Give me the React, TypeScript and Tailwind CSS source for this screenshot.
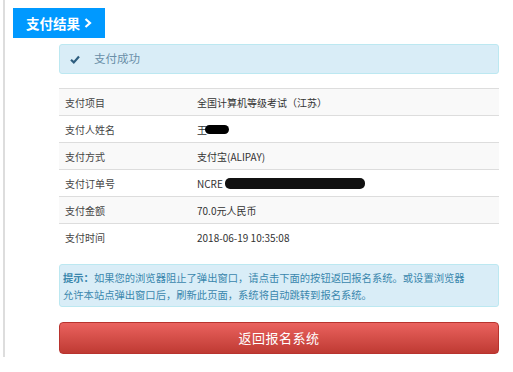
import React from "react";

const rows = [
    { label: "支付项目", value: "全国计算机等级考试（江苏）" },
    { label: "支付人姓名", value: "王", redact: "name" },
    { label: "支付方式", value: "支付宝(ALIPAY)" },
    { label: "支付订单号", value: "NCRE", redact: "order" },
    { label: "支付金额", value: "70.0元人民币" },
    { label: "支付时间", value: "2018-06-19 10:35:08" },
];

export default function App() {
    // JSX
    return (
        <div className="w-[513px] h-[372px] bg-white font-['Noto_Sans_CJK_SC',sans-serif] text-[#333]">
            <div className="ml-[3px] w-[510px] h-[357px] border-l-2 border-[#dddddd] pt-[8px]">
                {/* TITLE */}
                <div className="ml-[8px] w-[92px] h-[30px] bg-[#0099ff] flex items-center pl-[13px] gap-[4px] text-white text-[13.5px] font-bold">
                    <span>支付结果</span>
                    <svg width="8" height="10" viewBox="0 0 8 10">
                        <path d="M1.5 1 L6 5 L1.5 9" fill="none" stroke="white" strokeWidth="2.2" />
                    </svg>
                </div>

                <div className="ml-[54px] w-[440px]">
                    {/* SUCCESS ALERT */}
                    <div className="mt-[6px] h-[30px] rounded-[3px] border border-[#bce8f1] bg-[#d9edf7] flex items-center pl-[10px] text-[11.5px] text-[#6a8fa8]">
                        <svg width="10" height="9" viewBox="0 0 10 9" className="mr-[14px]">
                            <path d="M1 4.8 L3.8 7.4 L9 1.6" fill="none" stroke="#2d5d7e" strokeWidth="2.2" />
                        </svg>
                        <span>支付成功</span>
                    </div>

                    {/* TABLE */}
                    <div className="mt-[14px] text-[10px]">
                        {rows.map((row, i) => (
                            <div
                                key={row.label}
                                className={`h-[27px] border-t border-[#dddddd] flex items-center ${i % 2 === 0 ? 'bg-[#f9f9f9]' : 'bg-white'}`}
                            >
                                <div className="w-[132px] pl-[6px] text-[#444]">{row.label}</div>
                                <div className="pl-[6px] flex items-center text-[#333]">
                                    <span>{row.value}</span>
                                    {row.redact === "name" && (
                                        <span className="ml-[-2px] w-[24px] h-[9px] rounded-full bg-black" />
                                    )}
                                    {row.redact === "order" && (
                                        <span className="ml-[2px] w-[140px] h-[11px] rounded-[5px] bg-[#111]" />
                                    )}
                                </div>
                            </div>
                        ))}
                    </div>

                    {/* HINT */}
                    <div className="mt-[14px] h-[43px] rounded-[3px] border border-[#bce8f1] bg-[#d9edf7] pl-[3px] pt-[4px] text-[10.3px] leading-[17px] text-[#3a87ad]">
                        <p><b>提示：</b>如果您的浏览器阻止了弹出窗口，请点击下面的按钮返回报名系统。或设置浏览器</p>
                        <p>允许本站点弹出窗口后，刷新此页面，系统将自动跳转到报名系统。</p>
                    </div>

                    {/* BUTTON */}
                    <button className="mt-[15px] w-[440px] h-[32px] rounded-[4px] border border-[#b8332e] bg-gradient-to-b from-[#ea625e] to-[#bf3a33] text-white text-[13px] tracking-[0.5px]">
                        返回报名系统
                    </button>
                </div>
            </div>
        </div>
    )
}
